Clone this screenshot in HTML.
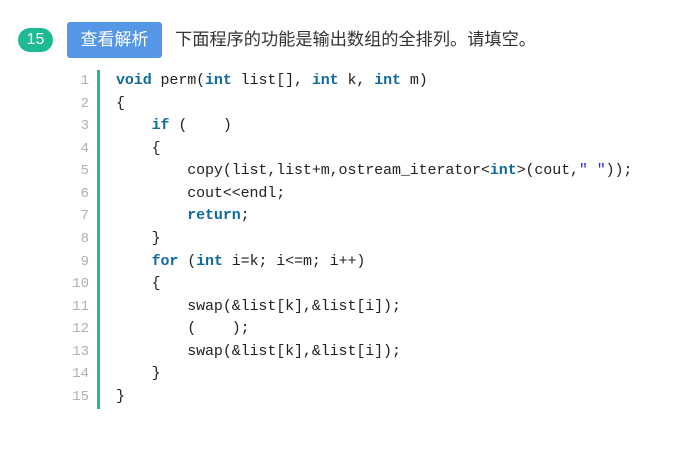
<!DOCTYPE html>
<html><head><meta charset="utf-8"><style>
body{margin:0;width:685px;height:461px;background:#fff;position:relative;overflow:hidden;font-family:"Liberation Sans","Noto Sans CJK SC",sans-serif}
.badge{position:absolute;left:18px;top:28px;width:35px;height:24px;border-radius:12px;background:#1dba94;color:#fff;font-size:16px;line-height:24px;text-align:center}
.btn{position:absolute;left:67px;top:22px;width:95px;height:36px;border-radius:3px;background:#5596e6;color:#fff;font-size:17px;line-height:36px;text-align:center}
.title{position:absolute;left:175px;top:26px;font-size:17.2px;line-height:26px;color:#333}
.nums{position:absolute;left:60px;top:70px;width:29px;text-align:right;font-family:"Liberation Mono",monospace;font-size:14px;line-height:22.57px;color:#b0b0b0;white-space:pre}
.bar{position:absolute;left:97px;top:70px;width:3px;height:339px;background:#1dba94}
pre{position:absolute;left:116px;top:70px;margin:0;font-family:"Liberation Mono",monospace;font-size:15px;letter-spacing:-0.1px;line-height:22.57px;color:#222}
b{color:#0e6aa0}
s{text-decoration:none;color:#2b2bd4}
</style></head><body>
<div class="badge">15</div>
<div class="btn">查看解析</div>
<div class="title">下面程序的功能是输出数组的全排列。请填空。</div>
<div class="nums">1
2
3
4
5
6
7
8
9
10
11
12
13
14
15</div>
<div class="bar"></div>
<pre><b>void</b> perm(<b>int</b> list[], <b>int</b> k, <b>int</b> m)
{
    <b>if</b> (    )
    {
        copy(list,list+m,ostream_iterator&lt;<b>int</b>&gt;(cout,<s>" "</s>));
        cout&lt;&lt;endl;
        <b>return</b>;
    }
    <b>for</b> (<b>int</b> i=k; i&lt;=m; i++)
    {
        swap(&amp;list[k],&amp;list[i]);
        (    );
        swap(&amp;list[k],&amp;list[i]);
    }
}</pre>
</body></html>
